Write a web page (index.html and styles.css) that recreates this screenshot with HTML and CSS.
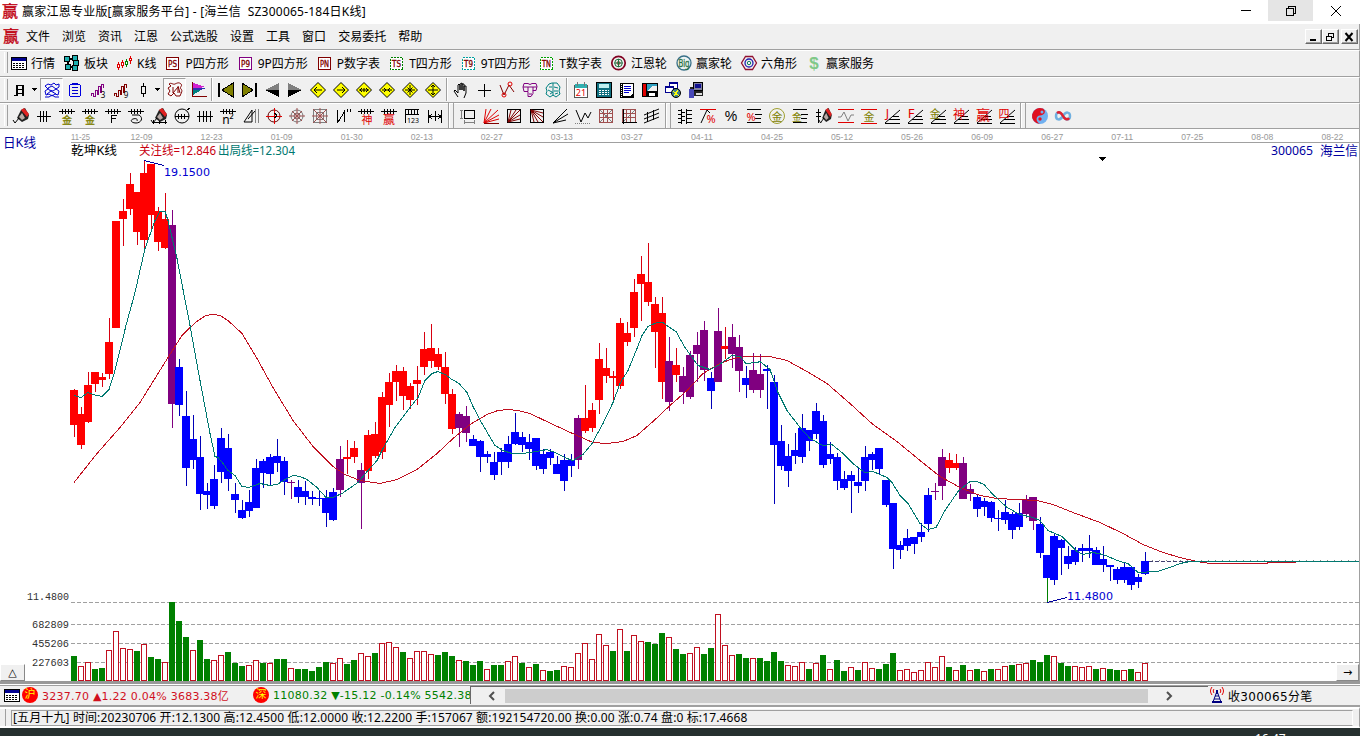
FILE: index.html
```
<!DOCTYPE html>
<html lang="zh-CN">
<head>
  <meta charset="UTF-8" />
  <title>赢家江恩专业版</title>
  <link rel="stylesheet" href="styles.css">
</head>
<body>
<div class="window">

  <header class="titlebar">
    <span class="logo" data-icon="ying"></span>
    <span class="title">赢家江恩专业版[赢家服务平台] - [海兰信&nbsp; SZ300065-184日K线]</span>
    <div class="win-buttons">
      <button><svg width="12" height="12"><path d="M1 5.500h10" stroke="#000"/></svg></button>
      <button class="hover"><svg width="12" height="12" fill="none" stroke="#000"><path d="M1.500 3.500h7v7h-7zM3.500 3.500v-2h7v7h-2"/></svg></button>
      <button><svg class="smooth" width="12" height="12"><path d="M1 1l10 10M11 1L1 11" stroke="#000"/></svg></button>
    </div>
  </header>

  <nav class="menubar">
    <span class="logo" data-icon="ying"></span>
    <a>文件</a><a>浏览</a><a>资讯</a><a>江恩</a><a>公式选股</a><a>设置</a><a>工具</a><a>窗口</a><a>交易委托</a><a>帮助</a>
    <div class="mdi-buttons">
      <button><svg width="12" height="10"><path d="M3 8h6" stroke="#000" stroke-width="2"/></svg></button>
      <button><svg width="12" height="10" fill="none" stroke="#000"><path d="M2.500 4.500h5v4h-5zM2 4h6M4.500 4V1.500h5v4H8M4 1h6"/></svg></button>
      <button class="close"><svg class="smooth" width="12" height="10"><path d="M2.500 1l7 8M9.500 1l-7 8" stroke="#000" stroke-width="2"/></svg></button>
    </div>
  </nav>

  <div class="toolbar labels" id="bar1"></div>
  <div class="toolbar" id="bar2"></div>
  <div class="toolbar" id="bar3"></div>

  <main class="chart">
    <svg id="chart" width="1359" height="552" viewBox="0 129 1359 552"></svg>
    <button class="corner left">△</button>
    <button class="corner right">→</button>
  </main>

  <div class="quotes">
    <div class="index-box">
      <span class="icon" data-icon="table"></span>
      <span class="badge">沪</span>
      <span class="up">3237.70 ▲1.22 0.04% 3683.38亿</span>
      <span class="badge second">深</span>
      <span class="down">11080.32 ▼-15.12 -0.14% 5542.38</span>
    </div>
    <div class="scroll">
      <svg width="8" height="10"><path d="M6 1L2 5l4 4"/></svg>
      <div class="thumb"></div>
      <svg width="8" height="10"><path d="M2 1l4 4-4 4"/></svg>
    </div>
    <div class="receive"><span class="icon" data-icon="tower"></span>收300065分笔</div>
  </div>

  <footer class="status">
    <div class="status-text">[五月十九] 时间:20230706 开:12.1300 高:12.4500 低:12.0000 收:12.2200 手:157067 额:192154720.00 换:0.00 涨:0.74 盘:0 标:17.4668</div>
  </footer>

  <div class="taskbar"><span>16:47</span></div>
</div>
<script src="script.js"></script>
</body>
</html>
```
FILE: styles.css
```
* {
  box-sizing: border-box;
}

body {
  margin: 0;
  width: 1360px;
  height: 736px;
  overflow: hidden;
  font-family: "Noto Sans", "Noto Sans CJK SC", sans-serif;
  font-size: 12px;
  color: #000;
  background: #f0f0f0;
}

button {
  padding: 0;
  border: none;
  background: none;
  font: inherit;
}

svg {
  display: block;
  shape-rendering: crispEdges;
}

svg.smooth,
svg .smooth {
  shape-rendering: auto;
}

.window {
  display: flex;
  flex-direction: column;
  height: 736px;
}

.titlebar {
  display: flex;
  height: 24px;
  background: #fff;
  line-height: 24px;
}

.logo {
  width: 16px;
  margin: 3px 4px 0 2px;
}

.title {
  flex: 1;
  white-space: pre;
  letter-spacing: 0.23px;
}

.win-buttons {
  display: flex;
  margin-right: 2px;
}

.win-buttons button {
  display: flex;
  justify-content: center;
  align-items: center;
  width: 45px;
  height: 21px;
}

.win-buttons .hover {
  background: #e5e5e5;
}

.menubar {
  display: flex;
  height: 26px;
  line-height: 25px;
  border-bottom: 1px solid #a0a0a0;
  border-right: 1px solid #a0a0a0;
}

.menubar .logo {
  margin: 4px 3px 0;
}

.menubar a {
  margin: 0 8px 0 4px;
}

.mdi-buttons {
  display: flex;
  margin: 5px 1px 0 auto;
}

.mdi-buttons button {
  width: 17px;
  height: 15px;
  padding: 1px;
  border: 1px solid;
  border-color: #fff #696969 #696969 #fff;
  box-shadow: inset -1px -1px #a0a0a0;
}

.mdi-buttons .close {
  margin-left: 2px;
}

.toolbar {
  display: flex;
  align-items: center;
  height: 26px;
  padding: 0 0 1px 7px;
  border-top: 1px solid #fff;
  border-bottom: 1px solid #a0a0a0;
  border-right: 1px solid #a0a0a0;
}

#bar1 {
  height: 27px;
  padding-bottom: 2px;
}

.toolbar::before {
  content: "";
  width: 2px;
  height: 21px;
  margin: 0 1px 0 -3px;
  border-left: 1px solid #fff;
  border-right: 1px solid #a0a0a0;
}

.labels {
  gap: 9px;
}

.labels::before {
  margin-right: -6px;
}

.tool {
  display: flex;
  align-items: center;
  gap: 4px;
  white-space: nowrap;
}

.cell {
  display: flex;
  flex: none;
  justify-content: center;
  align-items: center;
  width: 23px;
  height: 23px;
}

.cell.drop {
  width: 31px;
  gap: 4px;
}

.cell.pressed {
  background: #f8f8f8;
  border: 1px solid;
  border-color: #a0a0a0 #fff #fff #a0a0a0;
}

.sep {
  flex: none;
  width: 5px;
  height: 23px;
  background: linear-gradient(90deg, transparent 2px, #a0a0a0 2px, #a0a0a0 3px, #fff 3px, #fff 4px, transparent 4px);
}

.sep.double {
  width: 10px;
  height: 25px;
  background: linear-gradient(90deg, transparent 2px, #a0a0a0 2px, #a0a0a0 3px, #fff 3px, #fff 4px, transparent 4px, transparent 7px, #a0a0a0 7px, #a0a0a0 8px, transparent 8px);
}

.chart {
  position: relative;
  height: 552px;
  background: #fff;
  border-right: 1px solid #a0a0a0;
}

.chart text {
  white-space: pre;
}

.corner {
  position: absolute;
  bottom: 0;
  height: 17px;
  width: 25px;
  background: #f0f0f0;
  border: 1px solid;
  border-color: #fff #888 #888 #fff;
  font: 11px/14px "DejaVu Sans", sans-serif;
}

.corner.left {
  left: 0;
}

.corner.right {
  right: 0;
  width: 23px;
}

.quotes {
  display: flex;
  height: 26px;
  padding-top: 2px;
  border-top: 3px solid #999;
  border-bottom: 2px solid #a0a0a0;
  background: linear-gradient(#fff 1px, #a0a0a0 1px, #a0a0a0 2px, #f0f0f0 2px);
  font-family: "DejaVu Sans", "Noto Sans CJK SC", sans-serif;
  font-size: 11px;
}

.index-box {
  display: flex;
  align-items: center;
  width: 470px;
  height: 18px;
  padding-left: 4px;
  overflow: hidden;
  white-space: nowrap;
}

.index-box .icon {
  flex: none;
}

.badge {
  flex: none;
  width: 16px;
  height: 16px;
  margin: 0 4px 0 2px;
  border-radius: 50%;
  background: #f00;
  color: #ff0;
  font-size: 11px;
  line-height: 15px;
  text-align: center;
}

.up {
  flex: none;
  width: 209px;
  color: #d0101e;
  letter-spacing: 0.24px;
}

.down {
  flex: none;
  color: #008000;
  letter-spacing: 0.24px;
}

.scroll {
  display: flex;
  align-items: center;
  width: 738px;
  height: 18px;
  padding-left: 17px;
  border-top: 1px solid #696969;
  border-left: 1px solid #696969;
}

.scroll svg {
  fill: none;
  stroke: #505050;
  stroke-width: 2;
  shape-rendering: auto;
}

.thumb {
  width: 643px;
  height: 14px;
  margin: 0 17px 0 9px;
  background: #cdcdcd;
}

.receive {
  display: flex;
  align-items: center;
  gap: 3px;
  height: 18px;
  padding-left: 1px;
  font-size: 12px;
  letter-spacing: 0.3px;
}

.status {
  height: 21px;
  padding: 1px 6px 0 11px;
  background: linear-gradient(90deg, transparent 5px, #a0a0a0 5px, #a0a0a0 6px, transparent 6px);
  border-top: 2px solid #fff;
  border-right: 1px solid #a0a0a0;
  border-bottom: 2px solid #fff;
}

.status-text {
  height: 16px;
  padding-left: 1px;
  border: 1px solid;
  border-color: #a0a0a0 #fff #a0a0a0 #a0a0a0;
  line-height: 14px;
  white-space: pre;
  letter-spacing: 0.123px;
}

.taskbar {
  flex: 1;
  overflow: hidden;
  background: #26302f;
  color: #fff;
}

.taskbar span {
  display: block;
  margin: 2px 0 0 1255px;
}
```
FILE: script.js
```
const K = '#000', R = '#e00000', M = '#800000', B = '#0000d0', O = '#808000', P = '#800080', T = '#008080', G = '#808080';

function p(d, stroke, extra) {
  return `<path d="${d}" fill="none" stroke="${stroke || K}" ${extra || ''}/>`;
}
function f(d, fill, extra) {
  return `<path d="${d}" fill="${fill}" ${extra || ''}/>`;
}
function t(s, x, y, size, fill, extra) {
  return `<text x="${x}" y="${y}" font-size="${size}" fill="${fill}" text-anchor="middle" ${extra || ''}>${s}</text>`;
}
function boxed(s, color, dash) {
  return `<rect x="1.500" y="2.500" width="12" height="12" fill="#fff" stroke="${color}" ${dash ? 'stroke-dasharray="2 1"' : ''}/>` +
    t(s, 7.5, 11.5, 8, M, 'font-family="DejaVu Sans" textLength="9" lengthAdjust="spacingAndGlyphs" stroke="#800000" stroke-width=".3"');
}
const comb = p('M0 3.500h16M3.500 1v5M6.500 1v5M9.500 1v5M12.500 1v5');
const fan = p('M1 15L16 2', K, 'class="smooth"') + p('M1 15.500h15M5 11.500h11M9 8.500h6');
const pen = '<g class="smooth">' + f('M4 10L8 2l4-2 4 7-1 4-6 3z', '#222') + f('M8 2l3-2 5 6-2 3z', '#e02020') + f('M6 9l3-4 3 5-3 2z', '#b9aaa6') + p('M0 12l2 3 4-5') + '</g>';
const grid = p('M1.500 1.500h13v13h-13zM1 5.500h14M1 9.500h14M5.500 1v14M9.500 1v14', '#a05050');

function diamond(d) {
  return f('M8 .5L15.500 8 8 15.500.5 8z', '#ff0') + p('M8 .5L15.500 8 8 15.500.5 8z', K, 'class="smooth"') + p(d, K, 'class="smooth"');
}

const icons = {
  ying: t('赢', 8, 14, 16, '#c00010', 'font-family="Noto Sans CJK SC" stroke="#c00010" stroke-width=".3"'),
  table: '<rect x="0.500" y="2.500" width="15" height="12" fill="#fff" stroke="#000"/>' + f('M1 3h14v3H1z', '#000090') + p('M2 8.500h12M2 10.500h12M2 12.500h12', K, 'stroke-dasharray="2 1"'),
  blocks: p('M6 4h4M6 12h4M4 6v4M12 6v4', K, 'stroke-width="2"') + ['0 1', '8 0', '9 5', '1 9', '8 10'].map(v => `<rect x="${+v.split(' ')[0] + 0.5}" y="${+v.split(' ')[1] + 0.5}" width="5" height="5" fill="#20b0b0" stroke="#000"/>`).join(''),
  kline: p('M1.500 7v8M5.500 5v8', R) + p('M9.500 4v8', '#008000') + p('M13.500 1v8', R) + f('M0 9h3v4H0zM4 7h3v4H4zM12 3h3v3h-3z', R) + f('M8 6h3v4H8z', '#008000') + f('M1 10h1v2H1zM5 8h1v2H5zM9 7h1v2H9zM13 4h1v1h-1z', '#fff'),
  ps: boxed('PS', M), p9: boxed('P9', P), pn: boxed('PN', M),
  ts: boxed('TS', '#008000', true), t9: boxed('T9', '#00a0a0', true), tn: boxed('TN', '#00a000', true),
  wheel: '<g class="smooth" fill="none"><circle cx="7.500" cy="8" r="6.700" stroke="#800020" stroke-width="1.700"/><circle cx="7.500" cy="8" r="3.800" stroke="#207040"/><circle cx="7.500" cy="8" r="1.500" stroke="#a03020"/><path d="M7.500 4v8M3.500 8h8" stroke="#207040"/></g>',
  big: '<circle class="smooth" cx="8" cy="8" r="7" fill="#eef4f4" stroke="#387088" stroke-width="1.300"/>' + t('Big', 8, 11.5, 10, '#287040', 'textLength="11" lengthAdjust="spacingAndGlyphs" stroke="#287040" stroke-width=".3"'),
  hex: '<g class="smooth" fill="none"><path d="M4.500 1.500h7L15.500 8l-4 6.500h-7L0.500 8z" stroke="#901030" stroke-width="1.300"/><circle cx="8" cy="8" r="4" stroke="#2020b0" stroke-width="1.300"/><circle cx="8" cy="8" r="1.700" stroke="#108060"/></g>',
  dollar: t('$', 8, 14, 17, '#80c888', 'font-weight="bold" font-family="Liberation Sans"'),
  day: p('M4 3.500h8M4 7.500h8M4 11.500h8M2 13.500h3') + p('M5 3v11M11 3v11', K, 'stroke-width="2"'),
  ship: p('M1 4l3-2 3 1 3-2 2 2 3-1v3l-3 2 3 2-1 4-3-1-3 2-3-2-3 1-1-4 3-2zM4 6l4-2 4 3-3 2-4-1zM3 12l4-3 5 3M1 15h4l3-2 3 2h4', B, 'class="smooth"'),
  clip: '<rect x="2.500" y="2.500" width="11" height="12" rx="2" fill="none" stroke="#0000e0"/>' + p('M5 2.500c0-2 6-2 6 0M5 5.500h6M5 8.500h6M5 11.500h6', B),
  wave3: p('M1.500 14v-3h2v3h2V8h2v4h1V4h2v6h1V2h2v4', P) + t('3', 13, 15.5, 8, K),
  wave9: p('M1.500 14v-3h2v3h2V8h2v4h1V4h2v6h1V2h2v4', M) + t('9', 13, 15.5, 8, K),
  candle: p('M8.500 1v3M8.500 12v3M6.500 4.500h4v7h-4z'),
  scroll: p('M2 2c2-2 4 1 6 0s4-2 6 0-2 3 0 5 0 4-1 7H9l-2-3-3 3-3-2 2-3-2-3 3-2zM6 5v6l5-6v6M11 4l2 7', M, 'class="smooth"'),
  flag: f('M3 1l12 4-12 2z', '#d020d0') + f('M3 6h14L3 10z', '#3030b0') + f('M3 8h8l-8 5z', T) + p('M2.500 0v14.500h14', M),
  first: p('M1 1v14', K, 'stroke-width="2"') + f('M15 1v14L4 8z', O) + p('M15 1v14L4 8z'),
  last: p('M15 1v14', K, 'stroke-width="2"') + f('M1 1v14l11-7z', O) + p('M1 1v14l11-7z'),
  prev: f('M15 1v7H1z', G) + f('M15 15V8H1z', K),
  next: f('M1 1v7h14z', G) + f('M1 15V8h14z', K),
  d1: diamond('M4 8h8M7 5L4 8l3 3'), d2: diamond('M4 8h8M9 5l3 3-3 3'),
  d3: diamond('M3 8h10M6 6L4 8l2 2M10 6l2 2-2 2M8 6v4'), d4: diamond('M3 8h10M5 6l2 2-2 2M11 6L9 8l2 2'),
  d5: diamond('M3 8h10M8 3v10M5.500 5.500l5 5M10.500 5.500l-5 5'), d6: diamond('M3 8h10M8 3v10M6 5l2-2 2 2M6 11l2 2 2-2'),
  hand: p('M5 15L1 9l1-1 3 3V3l1-1 1 1v5-6l2-1v7-6h2v7-5h2v7l-2 5', K, 'class="smooth"'),
  cross: p('M8.500 2v13M2 8.500h13'),
  peaks: p('M1 3l4 10L10 3l5 7', M, 'class="smooth"') + p('M3 13a2 2 0 104 0 2 2 0 10-4 0M9 2a2 2 0 104 0 2 2 0 10-4 0', R, 'class="smooth"'),
  cloud: p('M2 1.500h4l2 1 2-1h4l1 3-1 4h-3v3l-2 3H6v-5H2L1 5zM1 5h5v4M15 5h-4v4M6 5h5M7 12h3', P, 'class="smooth"'),
  brain: p('M7 1L4 2 1 6l1 3-1 3 4 3 3-2 3 2 4-3-1-3 1-4-3-4zM8 1v13M4 5h3M3 8l4 2M5 12l3-2M9 5l4 1M9 9h4M10 12l3-1', T, 'class="smooth"'),
  cal: '<rect x="1.500" y="3.500" width="13" height="12" fill="#fff" stroke="#555"/>' + f('M2 2h12v4H2z', '#30b0b0') + p('M4.500 0v4M11.500 0v4', '#777') + t('21', 8, 14, 9, R),
  calc: '<rect x="0.500" y="0.500" width="15" height="15" fill="#107080" stroke="#000"/>' + f('M3 2h10v4H3z', '#c0f0f0') + p('M3 8.500h10M3 10.500h10M3 12.500h10', '#fff', 'stroke-dasharray="2 1"'),
  note: f('M1 1h14v15H1z', K) + f('M4 2h10v9l-3 3H4z', '#fff') + p('M5 4.500h7M5 6.500h7M5 8.500h7M5 10.500h5', B) + p('M2.500 2v13', '#fff', 'stroke-dasharray="1 1"'),
  disk: f('M0 1h16v14H0z', K) + f('M1 2h3v12H1z', R) + f('M5 2h10v7H5z', '#30a0c0') + f('M10 4h5v5H5z', '#f0f0f0') + f('M7 11h6v3H7z', '#fff'),
  globe: '<rect x="4.500" y="0.500" width="8" height="6" fill="#fff" stroke="#000090"/>' + f('M4 0h9v2H4z', '#000090') + '<rect x="0.500" y="4.500" width="8" height="6" fill="#fff" stroke="#000090"/>' + f('M0 4h9v2H0z', '#000090') + '<circle class="smooth" cx="11" cy="11" r="4.500" fill="#40808a" stroke="#000"/>' + p('M8 9l6 5M9 14l4-6', '#ff0'),
  pc: '<rect x="5.500" y="0.500" width="9" height="8" fill="#8080a0" stroke="#000"/>' + f('M7 2h6v4H7z', '#101090') + f('M1 7h5v9H1z', '#4848b8') + f('M2 5h3v2H2zM6 9h9v5H6z', '#222') + f('M8 11h6v2H8z', '#ddd'),
  pen, rule: p('M1 8.500h14M4.500 3v11M7.500 3v11M10.500 3v11'),
  gold: comb + t('金', 8, 15.5, 10, O, 'stroke="#808000" stroke-width=".3"'),
  fibo: comb + p('M6.500 15V7.500h5M6 10.500h5'),
  spiral: comb + p('M4 7h7c5 3 2 8-3 8s-6-3-3-4 5 0 4 2', K, 'class="smooth"'),
  penrule: pen + p('M1 14.500h15M2.500 12v4M8.500 13v3M14.500 12v4'),
  round: '<circle class="smooth" cx="8" cy="8" r="7" fill="none" stroke="#000"/>' + p('M1 8.500h14M4.500 6v5M7.500 6v5M10.500 6v5M13 2l3-2', K),
  rule4: p('M0 8.500h16M2.500 3v11M6.500 3v11M9.500 3v11M13.500 3v11'),
  n2: comb + t('n²', 8, 16, 12, K),
  gann: p('M1 14L9 2v12zM5 11l7-8', K, 'class="smooth"') + p('M12.500 1v14M15.500 1v14', G),
  orbit: '<g class="smooth"><circle cx="8" cy="8" r="6" fill="none" stroke="#600000"/></g>' + p('M0 8.500h16M8.500 0v16', R) + p('M8 5c3 0 3 5 0 5'),
  web: '<g class="smooth" fill="none" stroke="#777"><circle cx="8" cy="8" r="6"/><circle cx="8" cy="8" r="3"/><path d="M3 3l10 10M13 3L3 13M8 0v16M0 8h16" stroke="#a05050"/></g>',
  web2: p('M1.500 1.500h13v13h-13zM4.500 4.500h7v7h-7z', G) + p('M1 1l14 14M15 1L1 15M8 0v16M0 8h16', '#a05050', 'class="smooth"'),
  ratio: p('M2.500 2v13M3 14L10 3M9.500 2v12', K) + p('M12.500 1v3M15.500 1v3'),
  god: comb + t('神', 9, 15.5, 11, R), win: comb + t('赢', 8, 15.5, 12, R),
  scale: p('M1 1.500h14M1 6.500h14M1.500 1v14M4.500 2v4M7.500 2v4M10.500 2v4M13.500 2v4') + t('123', 9, 15, 7, K),
  span: p('M1.500 2v13M14.500 2v13M8.500 3v10M2 8.500h12M5 6L2 8.500 5 11M11 6l3 2.500-3 2.500'),
  rect: p('M4.500 2.500h10v8h-10z') + p('M1.500 2v9M0 2.500h3M0 10.500h3M4 14.500h11M4.500 12v4M14.500 12v4', G),
  fanr: p('M1 15L3 1M1 15L8 1M1 15L15 2M1 15l15-8M1 15l15-4', R, 'class="smooth"') + p('M1 15.500h15', M),
  fanbox: p('M1.500 1.500h13v13h-13z') + p('M2 14L5 2M2 14L10 2M2 14L14 2M2 14l12-7M2 14l12-3', M, 'class="smooth"'),
  fanbox2: p('M1.500 1.500h13v13h-13z') + p('M2 2l12 3M2 2l12 7M2 2l12 12M2 2l7 12M2 2l3 12', M, 'class="smooth"'),
  rays: p('M1 15L15 1M1 15l15-9M1 15l13-3', K, 'class="smooth"'),
  vee: p('M1 2l5 12L10 5l3 5 3-6', K, 'class="smooth"') + p('M0 15.500h16', G, 'stroke-dasharray="1 1"'),
  grid: p('M1 1l14 14M1 15L15 1', G) + grid, grid2: p('M1 15L15 1', G) + grid + p('M2.500 1v15M1 14.500h15'),
  chan: p('M0 7l15-6M0 11l15-6M0 15l15-6', K, 'class="smooth"') + p('M3.500 4v10M9.500 2v10'),
  ladder: p('M4.500 1v15M9.500 1v15') + p('M1 2.500h4M1 6.500h4M1 10.500h4M1 14.500h4M10 2.500h5M10 6.500h5M10 10.500h5M10 14.500h5M5 4.500h3M5 8.500h3M5 12.500h3'),
  pct1: p('M0 1.500h16', R) + p('M1 15L7 2l3 3', K, 'class="smooth"') + t('%', 11, 15, 11, R),
  pct: t('%', 8, 13, 14, K, 'font-family="Liberation Sans"'),
  pct2: p('M1 1.500h14M9 6.500h7M9 10.500h6M1 14.500h14') + t('%', 5, 13, 11, R),
  goldc: '<circle class="smooth" cx="8" cy="8" r="7.500" fill="none" stroke="#a0a030"/>' + t('金', 8, 12.5, 11, O),
  goldl: p('M1 1.500h14M9 6.500h7M9 10.500h6M1 14.500h14') + t('金', 5, 13, 10, O),
  penm: '<g transform="translate(4 0) scale(.8 1)">' + pen + '</g>' + p('M3.500 1v14M1 4.500h5M1 8.500h5'),
  sine: p('M0 1.500h16M0 14.500h16', R) + p('M0 9h3l3-5 4 9 3-6h3', G, 'class="smooth"'),
  goldr: p('M0 1.500h16M0 15.500h16', R) + t('金', 8, 13, 11, O),
  jfan: fan + t('J', 3.5, 10, 12, R), ffan: fan + t('F', 4, 10, 13, R), gfan: fan + t('金', 5, 10, 11, O),
  sfan: fan + t('神', 6, 11, 12, R), yfan: fan + t('赢', 7, 12, 14, R), sifan: fan + t('四', 5, 10, 11, R),
  taiji: '<g class="smooth"><circle cx="8" cy="8" r="8" fill="#70b0f0"/><path d="M8 16A8 8 0 1111 .600c4 3 1 7-3 7s-5 6 0 8.400z" fill="#e01020"/><circle cx="10" cy="4" r="1.500" fill="#70b0f0"/><circle cx="8" cy="11" r="1.700" fill="#e01020"/></g>',
  inf: '<g class="smooth" fill="none" stroke-width="2.500"><path d="M8 8C5 3 1 4 1 8s4 5 7 0 7-4 7 0-4 5-7 0z" stroke="#70b0e0"/><path d="M2 5c3-2 5 1 6 3s4 5 6 2" stroke="#e02030"/></g>',
  tower: '<g class="smooth">' + p('M5 2c-1 1-1 3 0 4M11 2c1 1 1 3 0 4M3 0c-2 3-2 5 0 8M13 0c2 3 2 5 0 8', R) + p('M8 4L4 15M8 4l4 11M6 9h4M5 12h6', '#000080') + '</g>' + f('M3 14h10v2H3zM7 3h2v4H7z', '#000080')
};

function svg(name) {
  return `<svg width="16" height="16" viewBox="0 0 16 16" overflow="visible">${icons[name]}</svg>`;
}
const arrow = '<svg width="5" height="3"><path d="M0 0h5L2.500 3z"/></svg>';

document.querySelectorAll('[data-icon]').forEach(el => el.innerHTML = svg(el.dataset.icon));

const labels = [['table', '行情'], ['blocks', '板块'], ['kline', 'K线'], ['ps', 'P四方形'], ['p9', '9P四方形'], ['pn', 'P数字表'],
  ['ts', 'T四方形'], ['t9', '9T四方形'], ['tn', 'T数字表'], ['wheel', '江恩轮'], ['big', '赢家轮'], ['hex', '六角形'], ['dollar', '赢家服务']];
document.getElementById('bar1').innerHTML = labels.map(l => `<div class="tool">${svg(l[0])}<span>${l[1]}</span></div>`).join('');

// | separator, || toolbar break, ! pressed, + drop-down
function build(id, list) {
  document.getElementById(id).innerHTML = list.split(' ').map(n => {
    if (n === '|') return '<div class="sep"></div>';
    if (n === '||') return '<div class="sep double"></div>';
    if (n[0] === '!') return `<div class="cell pressed">${svg(n.slice(1))}</div>`;
    if (n[0] === '+') return `<div class="cell drop">${svg(n.slice(1))}${arrow}</div>`;
    return `<div class="cell">${svg(n)}</div>`;
  }).join('');
}
build('bar2', '+day !ship clip wave3 wave9 +candle !scroll flag | first last prev next d1 d2 d3 d4 d5 d6 | hand cross peaks cloud brain | cal calc note disk globe pc');
build('bar3', 'pen rule gold gold fibo spiral penrule round rule4 n2 gann orbit web web2 ratio god win scale span || rect fanr fanbox fanbox2 rays vee grid grid2 chan || ladder pct1 pct pct2 goldc goldl penm sine goldr jfan ffan gfan sfan yfan sifan || taiji inf');

// colour, high, body top, body bottom, low
const candles = `r389,390,425,437 r407,414,445,449 r372,385,422,423 r372,372,384,392 r373,377,380,387 r318,342,374,379 r221,221,328,328
r199,211,219,246 r173,184,209,215 r192,192,232,245 r160,173,240,248 r164,164,215,231 r207,211,242,251 r193,219,248,249 p210,225,404,428
b359,367,405,416 b391,416,468,486 b415,439,460,469 b436,457,494,510 b483,491,495,509 b465,479,506,509 b428,438,472,483 b434,448,479,491
b483,494,500,513 b500,510,518,519 b490,502,511,517 b459,468,508,508 b459,461,473,488 b454,457,474,486 b439,456,463,472 b457,461,482,495
p480,482,483,499 b480,487,497,503 b481,491,497,505 b491,497,499,505 b491,498,499,506 b490,498,513,527 b488,492,520,521 p446,459,490,497
r440,457,459,474 r441,448,457,463 p463,470,483,529 r430,435,471,479 r422,434,456,458 r392,397,452,459 r373,382,405,427 r365,371,382,401
r367,371,396,410 r383,386,400,409 r366,380,384,405 r332,349,367,375 r324,348,361,368 r348,354,367,370 r352,367,394,404 r389,394,429,434
p412,414,428,447 p406,416,433,442 b435,439,446,446 b440,441,457,472 b451,454,457,463 b452,462,475,480 b448,452,462,475 b436,444,462,468
b413,432,444,445 b432,437,445,452 b434,442,449,460 b438,438,466,470 b449,454,469,474 b449,452,458,465 b456,464,474,474 b454,460,481,491
b454,460,466,477 p415,418,460,469 r385,418,431,433 r403,410,428,432 r343,359,400,414 r348,368,376,383 r371,376,378,402 r318,323,386,389
r322,333,342,346 r279,292,328,337 r256,274,284,321 r243,282,302,306 r297,304,332,368 r297,313,382,399 p337,361,402,411 r348,365,375,382
p367,376,392,404 p351,355,397,399 p332,345,354,382 p321,330,370,381 b372,378,391,409 p308,331,382,382 r327,346,349,359 p324,337,354,368
p335,347,371,392 b366,378,385,398 p353,370,390,393 p354,374,390,398 b365,369,371,409 b375,382,445,504 b425,441,466,470 b444,456,471,487
b433,450,456,464 b414,428,457,463 b430,430,441,451 b403,411,434,439 b415,421,465,468 b442,454,459,464 b453,457,481,490 b471,479,488,490
b471,475,481,513 b468,482,486,493 b446,457,481,491 b452,454,460,470 b448,448,469,475 b480,480,505,507 b503,503,549,569 b541,545,550,559
b529,538,546,551 b537,537,544,554 b523,532,537,542 b488,495,524,532 p483,491,492,500 p449,457,486,500 r453,460,468,473 r454,463,468,470
p457,463,499,499 p484,489,494,501 b494,497,509,517 b498,501,507,516 b501,502,518,522 b510,518,519,531 b500,512,520,524 b512,514,530,539
b503,513,527,530 p495,499,514,518 p497,497,521,530 b517,524,553,558 b555,555,578,578 b533,536,580,585 b539,540,548,575 b546,556,564,569
b547,550,562,565 b544,548,551,562 b535,548,551,558 b547,550,565,565 b546,559,565,572 b565,565,567,581 b567,569,580,584 b563,567,580,583
b567,567,585,590 b574,577,582,588 b552,561,574,575`.split(/\s+/);

// colour and top of each volume bar
const volumes = `g656 r666 r662 g669 g668 r650 r631 r648 r649 g651 r644 g657 g659 r662 g602 g621 g637 r650 g640 g659 r660 r655 g652 g663 g666
r665 r660 g663 r663 g659 g659 r668 g669 g669 g671 g667 g662 r663 r658 g664 g660 r653 r656 g653 r643 r642 r647 g652 r658 r651 r651 r654 g655
g652 g656 r660 g661 g665 g661 r669 g665 g665 r661 r656 g663 r667 g664 r670 g671 g670 r666 r667 r653 r643 r659 r634 r645 g651 r629 g651 r635
r641 g642 g644 g633 r637 g649 g654 r653 r647 g654 g648 r614 r645 r655 g654 g658 r658 g658 g661 g652 g661 r665 r666 r662 g669 r663 g655 r669
g660 g671 r667 g670 r662 r668 g669 g664 g653 r670 r669 r672 r670 r662 r667 r656 g667 r670 g665 r670 g669 r671 g669 r669 r666 g665 r664 r663
g660 g662 g655 r656 g663 g666 r666 r667 r666 g669 r668 g669 g670 r670 g669 r672 r663`.split(/\s+/);

const slow = '74,482 97,453 120,427 140,402 168,357 182,335 190,327 198,320 206,315 213,314 220,315 228,320 242,333 257,358 273,387 293,420 313,446 333,466 345,474 360,480 380,483 397,479 417,469 437,453 453,438 470,424 487,414 498,410 508,409 518,410 530,413 553,424 577,435 593,442 607,443 623,441 637,435 653,421 670,405 687,390 703,373 720,363 733,358 747,356 770,356 787,360 807,371 827,383 850,403 873,424 897,441 920,460 940,476 960,487 980,495 997,498 1037,500 1053,504 1073,512 1100,522 1123,533 1143,544 1163,552 1180,557 1197,561 1210,563 1267,563 1268,562 1296,562';
const fast = '74,395 81,397 88,392 93,394 102,396 109,389 115,370 126,325 135,292 145,248 155,220 160,211 165,211 168,220 177,258 190,325 200,380 210,433 215,456 218,457 223,463 228,470 235,475 242,486 249,487 260,483 270,485 277,484 287,478 293,475 300,476 307,479 317,487 326,497 333,497 342,493 358,482 368,470 377,460 383,448 395,427 410,407 418,397 425,380 432,373 438,371 445,374 452,379 459,383 467,392 473,406 482,423 495,445 503,450 512,453 522,453 537,451 547,449 555,452 567,458 573,460 583,454 592,443 603,423 613,402 620,383 628,370 637,348 642,335 648,326 657,322 663,322 668,326 676,331 685,347 698,365 710,369 718,365 732,355 740,356 746,363 757,362 760,361 770,369 778,392 787,410 800,427 810,438 823,445 832,444 843,453 853,463 865,472 873,471 887,477 892,482 900,495 908,503 920,523 928,529 936,527 945,510 958,491 970,481 977,481 984,484 992,493 1007,507 1020,514 1033,517 1040,520 1048,530 1062,536 1068,542 1077,551 1083,554 1093,552 1103,554 1120,561 1128,563 1138,572 1157,571 1170,567 1180,563 1190,561 1359,561';

const colors = { r: '#f00', b: '#00f', p: '#800080' };
const wicks = { r: '#d80010', b: '#0000b8', p: '#800080' };

function label(s, x, y, w, size, fill, font) {
  return `<text x="${x}" y="${y}" font-size="${size}" fill="${fill}" textLength="${w}" lengthAdjust="spacingAndGlyphs" ${font ? `font-family="${font}"` : ''}>${s}</text>`;
}

let out = '<path d="M71 142.500H1359" stroke="#a0a0a0"/>';
out += '<path d="M71 602.500H1359M71 624.500H1359M71 643.500H1359M71 662.500H1359" stroke="#a0a0a0" stroke-dasharray="4 2"/>';

['11-25', '12-09', '12-23', '01-09', '01-30', '02-13', '02-27', '03-13', '03-27', '04-11', '04-25', '05-12', '05-26', '06-09', '06-27', '07-11', '07-25', '08-08', '08-22']
  .forEach((d, i) => out += label(d, i ? 60.5 + i * 70.05 : 71, 140, i ? 22 : 19, 9.5, '#999', 'Liberation Sans'));

volumes.forEach((v, i) => {
  const x = 71 + i * 7, y = +v.slice(1);
  out += v[0] === 'g'
    ? `<rect x="${x}" y="${y}" width="6" height="${681 - y}" fill="#008000"/>`
    : `<rect x="${x + 0.5}" y="${y + 0.5}" width="5" height="${680 - y}" fill="#fff" stroke="#c01020"/>`;
});

candles.forEach((c, i) => {
  const x = 70 + i * 7, [hi, top, bottom, lo] = c.slice(1).split(',').map(Number);
  out += `<rect x="${x + 4}" y="${hi}" width="1" height="${lo - hi}" fill="${wicks[c[0]]}"/>`;
  out += `<rect x="${x}" y="${top}" width="8" height="${bottom - top}" fill="${colors[c[0]]}"/>`;
});

out += '<path d="M1047.500 578V602" stroke="#008000"/>';
out += '<path d="M1149 561.500H1190" stroke="#404070" stroke-dasharray="4 2"/><path d="M1152 560.500H1359" stroke="#888" stroke-dasharray="1 6"/>';
out += `<g fill="none" transform="translate(0 .5)"><polyline points="${slow}" stroke="#c01020"/><polyline points="${fast}" stroke="#007870"/></g>`;
out += '<path d="M144 160.500l20 5M1047 602.500l20-5" stroke="#0000a0" fill="none"/>';
out += '<path d="M1098.500 157h8l-4 4z"/>';

out += label('日K线', 3, 147, 33, 13, '#0000a0') + label('乾坤K线', 71, 155, 46, 12, '#000');
out += label('关注线=12.846', 139, 155, 77, 12, '#c80010') + label('出局线=12.304', 218, 155, 77, 12, '#007870');
out += label('300065', 1271, 155, 42, 12, '#0000a0') + label('海兰信', 1320, 155, 38, 13, '#0000a0');
out += label('19.1500', 164, 176, 46, 11, '#0000d0', 'DejaVu Sans') + label('11.4800', 1067, 600, 46, 11, '#0000d0', 'DejaVu Sans');
[['11.4800', 27, 600, 42], ['682809', 32, 628, 37], ['455206', 32, 647, 37], ['227603', 32, 666, 37]]
  .forEach(a => out += label(...a, 11, '#303030', 'Liberation Mono'));

document.getElementById('chart').innerHTML = out;
```
